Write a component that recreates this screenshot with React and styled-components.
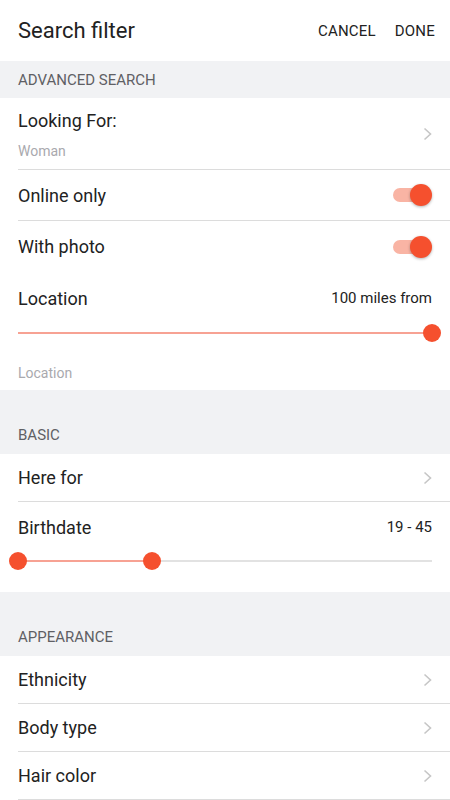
import React from "react";
import styled, { createGlobalStyle } from "styled-components";

const GlobalStyle = createGlobalStyle`
    body {
        margin: 0;
        background: #ffffff;
        font-family: Roboto, "Noto Sans", sans-serif;
        color: #222222;
    }
`;

const Page = styled.div`
    width: 450px;
    height: 800px;
    overflow: hidden;
    background: #ffffff;
`;

const Header = styled.div`
    height: 61px;
    display: flex;
    align-items: center;
    padding: 0 15px 0 18px;
    box-sizing: border-box;
`;

const Title = styled.h1`
    margin: 0 auto 0 0;
    font-size: 22px;
    font-weight: 400;
    color: #222222;
`;

const HeaderActions = styled.div`
    display: flex;
    gap: 19px;
`;

const ActionButton = styled.button`
    border: none;
    background: transparent;
    padding: 0;
    font-family: Roboto, sans-serif;
    font-size: 15px;
    font-weight: 400;
    letter-spacing: 0.2px;
    color: #222222;
    text-transform: uppercase;
`;

const SectionHeader = styled.div`
    background: #f1f2f4;
    padding: ${(p) => (p.$spaced ? "25px" : "0")} 18px 0;
    height: ${(p) => (p.$spaced ? "64px" : "37px")};
    box-sizing: border-box;
    display: flex;
    align-items: center;
    font-size: 15px;
    color: #5f6064;
    text-transform: uppercase;
`;

const Row = styled.div`
    margin-left: 18px;
    padding-right: 18px;
    height: ${(p) => p.$height || 47}px;
    display: flex;
    align-items: center;
    justify-content: space-between;
    border-bottom: ${(p) => (p.$divider ? "1px solid #dcdcdc" : "none")};
`;

const RowText = styled.div`
    display: flex;
    flex-direction: column;
    padding-top: 2px;
`;

const Label = styled.span`
    font-size: 18px;
    color: #222222;
`;

const SubLabel = styled.span`
    font-size: 14px;
    color: #a9a9ae;
    margin-top: 12px;
`;

const Value = styled.span`
    font-size: 15px;
    color: #222222;
`;

const Toggle = styled.div`
    position: relative;
    width: 39px;
    height: 22px;
`;

const ToggleTrack = styled.div`
    position: absolute;
    left: 0;
    top: 4px;
    width: 35px;
    height: 14px;
    border-radius: 7px;
    background: #f9b4a4;
`;

const ToggleKnob = styled.div`
    position: absolute;
    right: 0;
    top: 0;
    width: 22px;
    height: 22px;
    border-radius: 50%;
    background: #f5502e;
    box-shadow: 0 1px 3px rgba(0, 0, 0, 0.3);
`;

const SliderWrap = styled.div`
    margin: 0 18px;
    height: 18px;
    display: flex;
    align-items: center;
`;

const Track = styled.div`
    position: relative;
    width: 100%;
    height: 2px;
    background: #e2e2e2;
`;

const ActiveTrack = styled.div`
    position: absolute;
    top: 0;
    height: 2px;
    background: #f7a293;
`;

const Thumb = styled.div`
    position: absolute;
    top: 50%;
    width: 18px;
    height: 18px;
    margin: -9px 0 0 -9px;
    border-radius: 50%;
    background: #f5502e;
`;

const Placeholder = styled.div`
    margin: 21px 18px 0;
    height: 20px;
    line-height: 20px;
    font-size: 14px;
    color: #a9a9ae;
`;

const Block = styled.div`
    padding-bottom: ${(p) => p.$bottom || 0}px;
`;

const Chevron = () => (
    <svg width="9" height="14" viewBox="0 0 9 14">
        <polyline points="1.5,1.5 7.5,7 1.5,12.5" fill="none" stroke="#c6c6c6" strokeWidth="1.6" />
    </svg>
);

const Switch = () => (
    <Toggle>
        <ToggleTrack />
        <ToggleKnob />
    </Toggle>
);

const Slider = ({ from, to }) => (
    <SliderWrap>
        <Track>
            <ActiveTrack style={{ left: `${from}%`, width: `${to - from}%` }} />
            {from > 0 || to < 100 ? <Thumb style={{ left: `${from}%` }} /> : null}
            <Thumb style={{ left: `${to}%` }} />
        </Track>
    </SliderWrap>
);

const NavRow = ({ label, divider = true }) => (
    <Row $height={47} $divider={divider}>
        <Label>{label}</Label>
        <Chevron />
    </Row>
);

const App = () => {
    return (
        <>
            <GlobalStyle />
            <Page>
                <Header>
                    <Title>Search filter</Title>
                    <HeaderActions>
                        <ActionButton>Cancel</ActionButton>
                        <ActionButton>Done</ActionButton>
                    </HeaderActions>
                </Header>

                <SectionHeader>Advanced search</SectionHeader>
                <Row $height={71} $divider>
                    <RowText>
                        <Label>Looking For:</Label>
                        <SubLabel>Woman</SubLabel>
                    </RowText>
                    <Chevron />
                </Row>
                <Row $height={50} $divider>
                    <Label>Online only</Label>
                    <Switch />
                </Row>
                <Row $height={51}>
                    <Label>With photo</Label>
                    <Switch />
                </Row>
                <Block $bottom={7}>
                    <Row $height={52}>
                        <Label>Location</Label>
                        <Value>100 miles from</Value>
                    </Row>
                    <Slider from={0} to={100} />
                    <Placeholder>Location</Placeholder>
                </Block>

                <SectionHeader $spaced>Basic</SectionHeader>
                <NavRow label="Here for" />
                <Block $bottom={22}>
                    <Row $height={50}>
                        <Label>Birthdate</Label>
                        <Value>19 - 45</Value>
                    </Row>
                    <Slider from={0} to={32.4} />
                </Block>

                <SectionHeader $spaced>Appearance</SectionHeader>
                <NavRow label="Ethnicity" />
                <NavRow label="Body type" />
                <NavRow label="Hair color" />
            </Page>
        </>
    );
};

export default App;
